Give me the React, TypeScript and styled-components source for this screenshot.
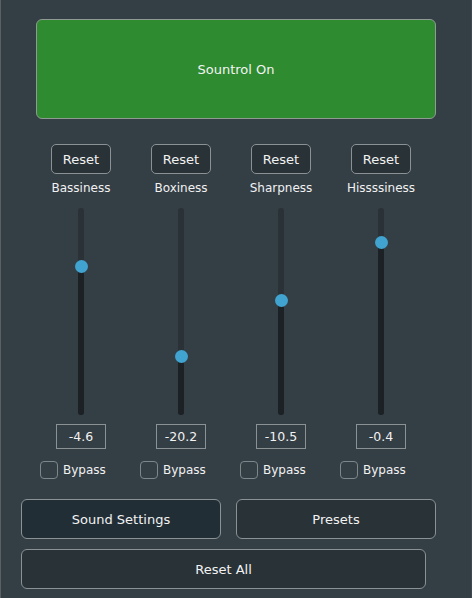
import React from 'react'
import styled, { createGlobalStyle } from 'styled-components'

type Band = {
  label: string
  value: number
}

const bands: Band[] = [
  { label: 'Bassiness', value: -4.6 },
  { label: 'Boxiness', value: -20.2 },
  { label: 'Sharpness', value: -10.5 },
  { label: 'Hissssiness', value: -0.4 }
]

const GlobalStyle = createGlobalStyle`
  html, body {
    margin: 0;
    padding: 0;
    background: #343e45;
  }
  body {
    font-family: "DejaVu Sans", Verdana, sans-serif;
    color: #f2f2f2;
  }
`

const Panel = styled.div`
  box-sizing: border-box;
  width: 472px;
  height: 598px;
  background: #343e45;
  border-left: 1px solid #5b6064;
  border-right: 1px solid #3f484e;
  padding: 19px 0 0 0;
  display: flex;
  flex-direction: column;
`

const PowerButton = styled.button`
  box-sizing: border-box;
  margin-left: 35px;
  width: 400px;
  height: 100px;
  background: #2e8b30;
  border: 1px solid #8e9a92;
  border-radius: 6px;
  color: #f4f4f4;
  font-family: inherit;
  font-size: 13px;
`

const Bands = styled.div`
  display: grid;
  grid-template-columns: repeat(4, 100px);
  margin: 25px 0 0 30px;
`

const Column = styled.div`
  display: flex;
  flex-direction: column;
  align-items: center;
`

const SmallButton = styled.button`
  box-sizing: border-box;
  width: 60px;
  height: 30px;
  padding: 0;
  background: #293237;
  border: 1px solid #8a9296;
  border-radius: 5px;
  color: #f2f2f2;
  font-family: inherit;
  font-size: 13px;
`

const Label = styled.div`
  margin-top: 7px;
  font-size: 12px;
  line-height: 14px;
  white-space: nowrap;
`

const Track = styled.div`
  position: relative;
  margin-top: 13px;
  width: 6px;
  height: 207px;
  border-radius: 3px;
  background: #2a3237;
`

const Fill = styled.div`
  position: absolute;
  left: 0;
  right: 0;
  bottom: 0;
  border-radius: 0 0 3px 3px;
  background: #1b2124;
`

const Thumb = styled.div`
  position: absolute;
  left: -3.5px;
  width: 13px;
  height: 13px;
  margin-top: -6px;
  border-radius: 50%;
  background: #41a3cf;
`

const ValueBox = styled.div`
  box-sizing: border-box;
  margin-top: 9px;
  width: 50px;
  height: 25px;
  border: 1px solid #8a9296;
  display: flex;
  align-items: center;
  justify-content: center;
  font-size: 12.5px;
`

const BypassRow = styled.label`
  align-self: flex-start;
  margin: 12px 0 0 9px;
  display: flex;
  align-items: center;
  gap: 5px;
  font-size: 12px;
`

const Check = styled.span`
  box-sizing: border-box;
  width: 18px;
  height: 18px;
  border: 1px solid #7d868b;
  border-radius: 4px;
  background: #343e45;
`

const Footer = styled.div`
  margin: 20px 0 0 20px;
  display: grid;
  grid-template-columns: 200px 200px;
  column-gap: 15px;
  row-gap: 10px;
`

const WideButton = styled.button<{ $dark?: boolean; $full?: boolean }>`
  box-sizing: border-box;
  height: 40px;
  width: ${(p) => (p.$full ? '405px' : '200px')};
  grid-column: ${(p) => (p.$full ? '1 / span 2' : 'auto')};
  background: ${(p) => (p.$dark ? '#222e36' : '#293237')};
  border: 1px solid #8a9296;
  border-radius: 6px;
  color: #f2f2f2;
  font-family: inherit;
  font-size: 13px;
`

// thumb centre offset from top of the track, fitted to the dB value
const thumbOffset = (v: number) => 31.2 - 5.76 * v

const BandColumn: React.FC<Band> = ({ label, value }) => {
  const top = thumbOffset(value)
  return (
    <Column>
      <SmallButton>Reset</SmallButton>
      <Label>{label}</Label>
      <Track>
        <Fill style={{ top: `${top}px` }} />
        <Thumb style={{ top: `${top}px` }} />
      </Track>
      <ValueBox>{value.toFixed(1)}</ValueBox>
      <BypassRow>
        <Check />
        Bypass
      </BypassRow>
    </Column>
  )
}

const App: React.FC = () => {
  return (
    <>
      <GlobalStyle />
      <Panel>
        <PowerButton>Sountrol On</PowerButton>
        <Bands>
          {bands.map((b) => (
            <BandColumn key={b.label} label={b.label} value={b.value} />
          ))}
        </Bands>
        <Footer>
          <WideButton $dark>Sound Settings</WideButton>
          <WideButton>Presets</WideButton>
          <WideButton $full>Reset All</WideButton>
        </Footer>
      </Panel>
    </>
  )
}

export default App
